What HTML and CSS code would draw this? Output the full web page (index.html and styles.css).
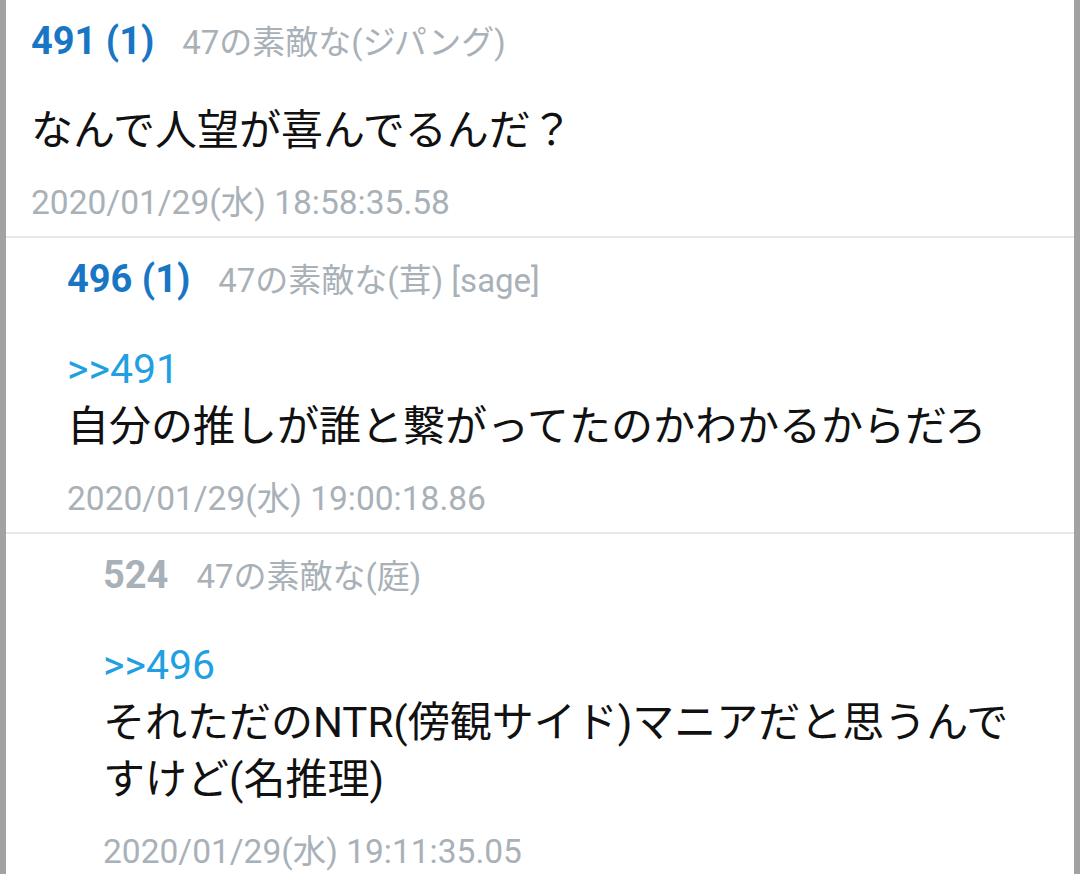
FILE: index.html
```html
<!DOCTYPE html>
<html lang="ja">
<head>
<meta charset="utf-8">
<title>スレッド</title>
<link rel="stylesheet" href="styles.css">
</head>
<body>
<div class="thread">
  <article class="post depth-0">
    <header class="post-head"><span class="num">491 (1)</span><span class="name">47の素敵な(ジパング)</span></header>
    <div class="post-body">なんで人望が喜んでるんだ？</div>
    <div class="post-date">2020/01/29(水) 18:58:35.58</div>
  </article>
  <article class="post depth-1">
    <header class="post-head"><span class="num">496 (1)</span><span class="name">47の素敵な(茸) [sage]</span></header>
    <div class="post-body"><span class="anchor">&gt;&gt;491</span><br>自分の推しが誰と繋がってたのかわかるからだろ</div>
    <div class="post-date">2020/01/29(水) 19:00:18.86</div>
  </article>
  <article class="post depth-2">
    <header class="post-head"><span class="num muted">524</span><span class="name">47の素敵な(庭)</span></header>
    <div class="post-body"><span class="anchor">&gt;&gt;496</span><br>それただのNTR(傍観サイド)マニアだと思うんですけど(名推理)</div>
    <div class="post-date">2020/01/29(水) 19:11:35.05</div>
  </article>
</div>
</body>
</html>
```
FILE: styles.css
```css
html, body {
  margin: 0;
  padding: 0;
  background: #ffffff;
}

body {
  font-family: Roboto, "Noto Sans CJK JP", sans-serif;
  color: #111111;
}

.thread {
  width: 1080px;
  min-height: 874px;
  box-sizing: border-box;
  border-left: 6px solid #a2a2a2;
  border-right: 6px solid #a2a2a2;
  overflow: hidden;
}

.post {
  padding: 17px 40px 13px 25px;
}

.post + .post {
  border-top: 2px solid #e8e8e8;
}

.depth-1 { padding-left: 61px; }
.depth-2 { padding-left: 97px; }

.post-head {
  display: flex;
  align-items: baseline;
  gap: 28px;
  line-height: 48px;
  height: 48px;
}

.num {
  font-weight: 700;
  font-size: 38px;
  color: #1976c4;
}

.num.muted {
  color: #a9b1b8;
}

.name {
  font-size: 33px;
  color: #a9b1b8;
}

.post-body {
  margin-top: 37px;
  font-size: 42px;
  line-height: 57px;
}

.anchor {
  font-size: 41px;
  color: #1fa0e3;
}

.post-date {
  margin-top: 24px;
  font-size: 33.5px;
  line-height: 40px;
  color: #a9b1b8;
}
```
